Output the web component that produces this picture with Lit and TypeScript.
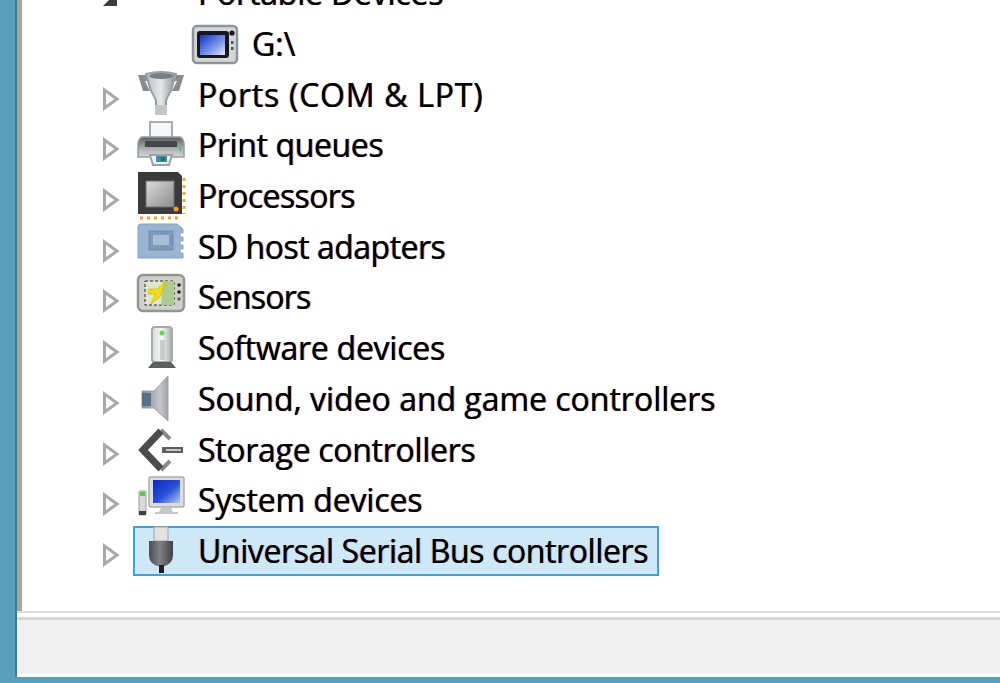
import { LitElement, html, css, svg } from "lit";
import { customElement } from "lit/decorators.js";

const icons: Record<string, unknown> = {
  portable: svg`<rect x="3" y="-6" width="42" height="30" rx="3" fill="#b9bdc2" stroke="#8b9096" stroke-width="2"/><rect x="8" y="-4" width="26" height="22" fill="#1c3fb0"/>`,
  drive: svg`<defs><linearGradient id="dg" x1="0" y1="0" x2="1" y2="1"><stop offset="0" stop-color="#1030c8"/><stop offset=".6" stop-color="#7d97ea"/><stop offset="1" stop-color="#e6ecfa"/></linearGradient></defs>
    <rect x="2" y="6" width="44" height="37" rx="4" fill="#d4d7da" stroke="#8f9499" stroke-width="2.5"/>
    <rect x="6" y="11" width="32" height="27" rx="3" fill="#16181d"/><rect x="9" y="15" width="25" height="20" fill="url(#dg)"/>
    <circle cx="41" cy="13" r="2.6" fill="#15171a"/><rect x="40" y="21" width="2.5" height="3" fill="#555"/><rect x="40" y="27" width="2.5" height="3" fill="#555"/>`,
  ports: svg`<defs><linearGradient id="pg" x1="0" y1="0" x2="1" y2="0"><stop offset="0" stop-color="#b9bfc4"/><stop offset=".5" stop-color="#e6e9eb"/><stop offset="1" stop-color="#868d93"/></linearGradient></defs>
    <path d="M1 4 H15 V10 H8 L13 20 H6 Z M47 4 H33 V10 H40 L35 20 H42 Z" fill="#868c91"/>
    <path d="M9 3 Q24 -1 39 3 L34 20 Q30 26 29 30 V42 H19 V30 Q18 26 14 20 Z" fill="url(#pg)" stroke="#989ea3" stroke-width="2"/>
    <ellipse cx="24" cy="5" rx="12" ry="3" fill="#767d83"/><rect x="18" y="34" width="12" height="10" fill="#c2c6c9"/>`,
  printer: svg`<defs><linearGradient id="prg" x1="0" y1="0" x2="0" y2="1"><stop offset="0" stop-color="#5a5e62"/><stop offset=".55" stop-color="#a7abaf"/><stop offset="1" stop-color="#d6d8da"/></linearGradient></defs>
    <rect x="13" y="1" width="22" height="18" fill="#f7f7f7" stroke="#a8adb1" stroke-width="2"/>
    <path d="M5 16 H43 Q47 18 47 24 V36 H1 V24 Q1 18 5 16 Z" fill="url(#prg)" stroke="#969a9e" stroke-width="1.5"/>
    <rect x="8" y="20" width="32" height="6" fill="#43474b"/><rect x="42" y="26" width="2" height="4" fill="#53c653"/>
    <path d="M13 34 H35 L32 44 H16 Z" fill="#eef1f3" stroke="#9da2a6" stroke-width="2"/><rect x="19" y="35" width="11" height="6" fill="#3a8db0"/><rect x="24" y="36" width="4" height="4" fill="#2c7b3c"/>`,
  cpu: svg`<defs><linearGradient id="cg" x1="0" y1="0" x2="1" y2="1"><stop offset="0" stop-color="#dcdcdc"/><stop offset="1" stop-color="#8b8b8b"/></linearGradient></defs>
    <path d="M1 0 H41 L45 4 V42 H1 Z" fill="#3a3a3a"/><rect x="9" y="9" width="28" height="26" fill="url(#cg)" stroke="#6e6e6e"/>
    <path d="M47 6 V42 M3 46 H44" stroke="#e8a63b" stroke-width="3" stroke-dasharray="3 4" fill="none"/><circle cx="39" cy="37" r="2.5" fill="#f0a22e"/>`,
  sd: svg`<path d="M1 4 Q1 1 4 1 H40 L46 6 V10 H43 V14 H46 V18 H43 V22 H46 V26 H43 V30 H46 V35 H1 Z" fill="#9ab4d4" stroke="#86a2c8"/>
    <rect x="12" y="8" width="24" height="19" fill="#7e97ba" stroke="#6f8bb2"/><rect x="16" y="12" width="16" height="10" fill="#a9bdd6"/>`,
  sensor: svg`<rect x="1" y="2" width="46" height="36" rx="5" fill="#cfd0cd" stroke="#929590" stroke-width="2.5"/>
    <rect x="8" y="8" width="29" height="24" fill="#dfe8cf" stroke="#2a2a2a" stroke-dasharray="3 2"/><path d="M26 8 L37 8 V32 L24 32 Z" fill="#aecb94"/>
    <path d="M12 16 H20 L29 8 L23 24 L14 31 L18 21 H11 Z" fill="#f0dc1e" stroke="#c9b800" stroke-width=".7"/>
    <circle cx="42" cy="12" r="1.8" fill="#222"/><circle cx="42" cy="19" r="1.8" fill="#222"/><circle cx="42" cy="26" r="1.8" fill="#666"/>`,
  software: svg`<defs><linearGradient id="sg" x1="0" y1="0" x2="1" y2="0"><stop offset="0" stop-color="#d9dbdb"/><stop offset=".5" stop-color="#f7f7f7"/><stop offset="1" stop-color="#a5a9aa"/></linearGradient></defs>
    <rect x="15" y="3" width="20" height="35" rx="3" fill="url(#sg)" stroke="#a6aaab" stroke-width="2"/><rect x="23" y="16" width="5" height="20" fill="#c8cccc"/>
    <circle cx="25" cy="9" r="2.5" fill="#5ddc4e"/><path d="M11 44 L16 38 H34 L39 44 Z" fill="#5c5f60"/>`,
  sound: svg`<defs><linearGradient id="sng" x1="0" y1="0" x2="1" y2="0"><stop offset="0" stop-color="#82888d"/><stop offset=".7" stop-color="#c4c8cb"/><stop offset="1" stop-color="#9fa4a8"/></linearGradient></defs>
    <path d="M31 1 V46 L17 33 H5 V16 H17 Z" fill="url(#sng)" stroke="#9ba1a6"/><rect x="5" y="18" width="9" height="13" fill="#54708a"/>`,
  storage: svg`<path d="M24 4 L33 13 M24 44 L33 35" stroke="#87898b" stroke-width="4" fill="none"/>
    <path d="M24 5 L6 24 L24 43" stroke="#4a4c4e" stroke-width="7" fill="none"/>
    <rect x="25" y="21" width="21" height="6" fill="#5a5c5e"/><rect x="29" y="23" width="15" height="2" fill="#c4c6c8"/>`,
  system: svg`<defs><linearGradient id="syg" x1="0" y1="0" x2="1" y2="1"><stop offset="0" stop-color="#0b27c4"/><stop offset=".55" stop-color="#2a52d6"/><stop offset="1" stop-color="#b6c6f0"/></linearGradient></defs>
    <rect x="12" y="1" width="35" height="30" rx="2" fill="#dcdedd" stroke="#aaaeac" stroke-width="1.5"/><rect x="16" y="4" width="27" height="23" fill="url(#syg)"/>
    <path d="M24 32 H34 L36 36 H41 V38 H18 V36 H22 Z" fill="#c5c8c7"/><rect x="2" y="15" width="7" height="24" rx="1" fill="#d7dad9" stroke="#9c9f9e"/><rect x="3" y="16" width="5" height="4" fill="#59c94a"/><rect x="2" y="35" width="7" height="4" fill="#3f4141"/>`,
  usb: svg`<defs><linearGradient id="ug" x1="0" y1="0" x2="1" y2="0"><stop offset="0" stop-color="#4b4d50"/><stop offset=".45" stop-color="#7e8186"/><stop offset="1" stop-color="#3f4144"/></linearGradient></defs>
    <rect x="17" y="0" width="14" height="14" fill="#e4e2e0" stroke="#a4a4a4"/><path d="M12 14 H36 V28 Q36 36 28 39 H20 Q12 36 12 28 Z" fill="url(#ug)"/><rect x="22" y="38" width="5" height="8" fill="#1f2022"/>`,
};

type Row = { label: string; icon: string; ls: number; exp?: "open" | "closed"; child?: boolean; selected?: boolean };

const rows: Row[] = [
  { label: "Portable Devices", icon: "portable", ls: -0.2, exp: "open" },
  { label: "G:\\", icon: "drive", ls: 0, child: true },
  { label: "Ports (COM & LPT)", icon: "ports", ls: 0.74, exp: "closed" },
  { label: "Print queues", icon: "printer", ls: -0.37, exp: "closed" },
  { label: "Processors", icon: "cpu", ls: -0.6, exp: "closed" },
  { label: "SD host adapters", icon: "sd", ls: -0.5, exp: "closed" },
  { label: "Sensors", icon: "sensor", ls: -0.77, exp: "closed" },
  { label: "Software devices", icon: "software", ls: -0.26, exp: "closed" },
  { label: "Sound, video and game controllers", icon: "sound", ls: -0.02, exp: "closed" },
  { label: "Storage controllers", icon: "storage", ls: -0.3, exp: "closed" },
  { label: "System devices", icon: "system", ls: -0.13, exp: "closed" },
  { label: "Universal Serial Bus controllers", icon: "usb", ls: -0.39, exp: "closed", selected: true },
];

@customElement("app-root")
export class AppRoot extends LitElement {
  static styles = css`
    :host { display: block; width: 1000px; height: 683px; overflow: hidden; background: #5a9fb9; }
    .frame { height: 681px; margin: -4px -6px 0 15px; display: flex; flex-direction: column; border-left: 2px solid #2f7f9f; background: #fff; filter: blur(0.7px); }
    .tree { flex: 1; min-height: 0; overflow: hidden; border-left: 5px solid #aaa4a1; background: #fff; }
    .list { margin-top: -28px; padding-left: 78px; font: 32px/1 "Open Sans", "Noto Sans", sans-serif; color: #000; }
    .row { height: 50.7px; display: flex; align-items: center; }
    .row.child { padding-left: 87px; }
    .exp { width: 33px; height: 24px; margin-top: 8px; flex: none; display: flex; }
    .item { height: 50px; display: flex; align-items: center; padding: 0 9px 0 2px; border: 2px solid transparent; white-space: nowrap; box-sizing: border-box; }
    .item.selected { border-color: #3ba3dc; background: #cfe8f8; }
    .icon { width: 48px; height: 48px; flex: none; overflow: visible; margin-right: 13px; }
    .label { text-shadow: -0.9px 0 rgba(230, 110, 20, 0.55), 0.9px 0 rgba(20, 70, 220, 0.55), 0 0 0.4px #000; }
    .status { height: 66px; flex: none; box-sizing: border-box; border-top: 2px solid #dcdcdc; padding-top: 4px; background: #fff; }
    .status-in { height: 100%; box-sizing: border-box; background: #f0f0f0; border-top: 3px solid #d6d6d6; border-bottom: 4px solid #fbf9f6; }
  `;

  render() {
    return html`<div class="frame">
      <div class="tree"><div class="list">
        ${rows.map((r) => html`<div class="row ${r.child ? "child" : ""}">
          ${r.child ? "" : html`<div class="exp"><svg width="20" height="24" viewBox="0 0 20 24">
            ${r.exp === "open"
              ? svg`<path d="M3 21 L17 21 L17 7 Z" fill="#3c3c3c"/>`
              : svg`<path d="M4.5 3 L17 12 L4.5 21 Z" fill="#fff" stroke="#a8a8a8" stroke-width="3"/>`}
          </svg></div>`}
          <div class="item ${r.selected ? "selected" : ""}">
            <svg class="icon" viewBox="0 0 48 48">${icons[r.icon]}</svg>
            <span class="label" style="letter-spacing:${r.ls}px">${r.label}</span>
          </div>
        </div>`)}
      </div></div>
      <div class="status"><div class="status-in"></div></div>
    </div>`;
  }
}
